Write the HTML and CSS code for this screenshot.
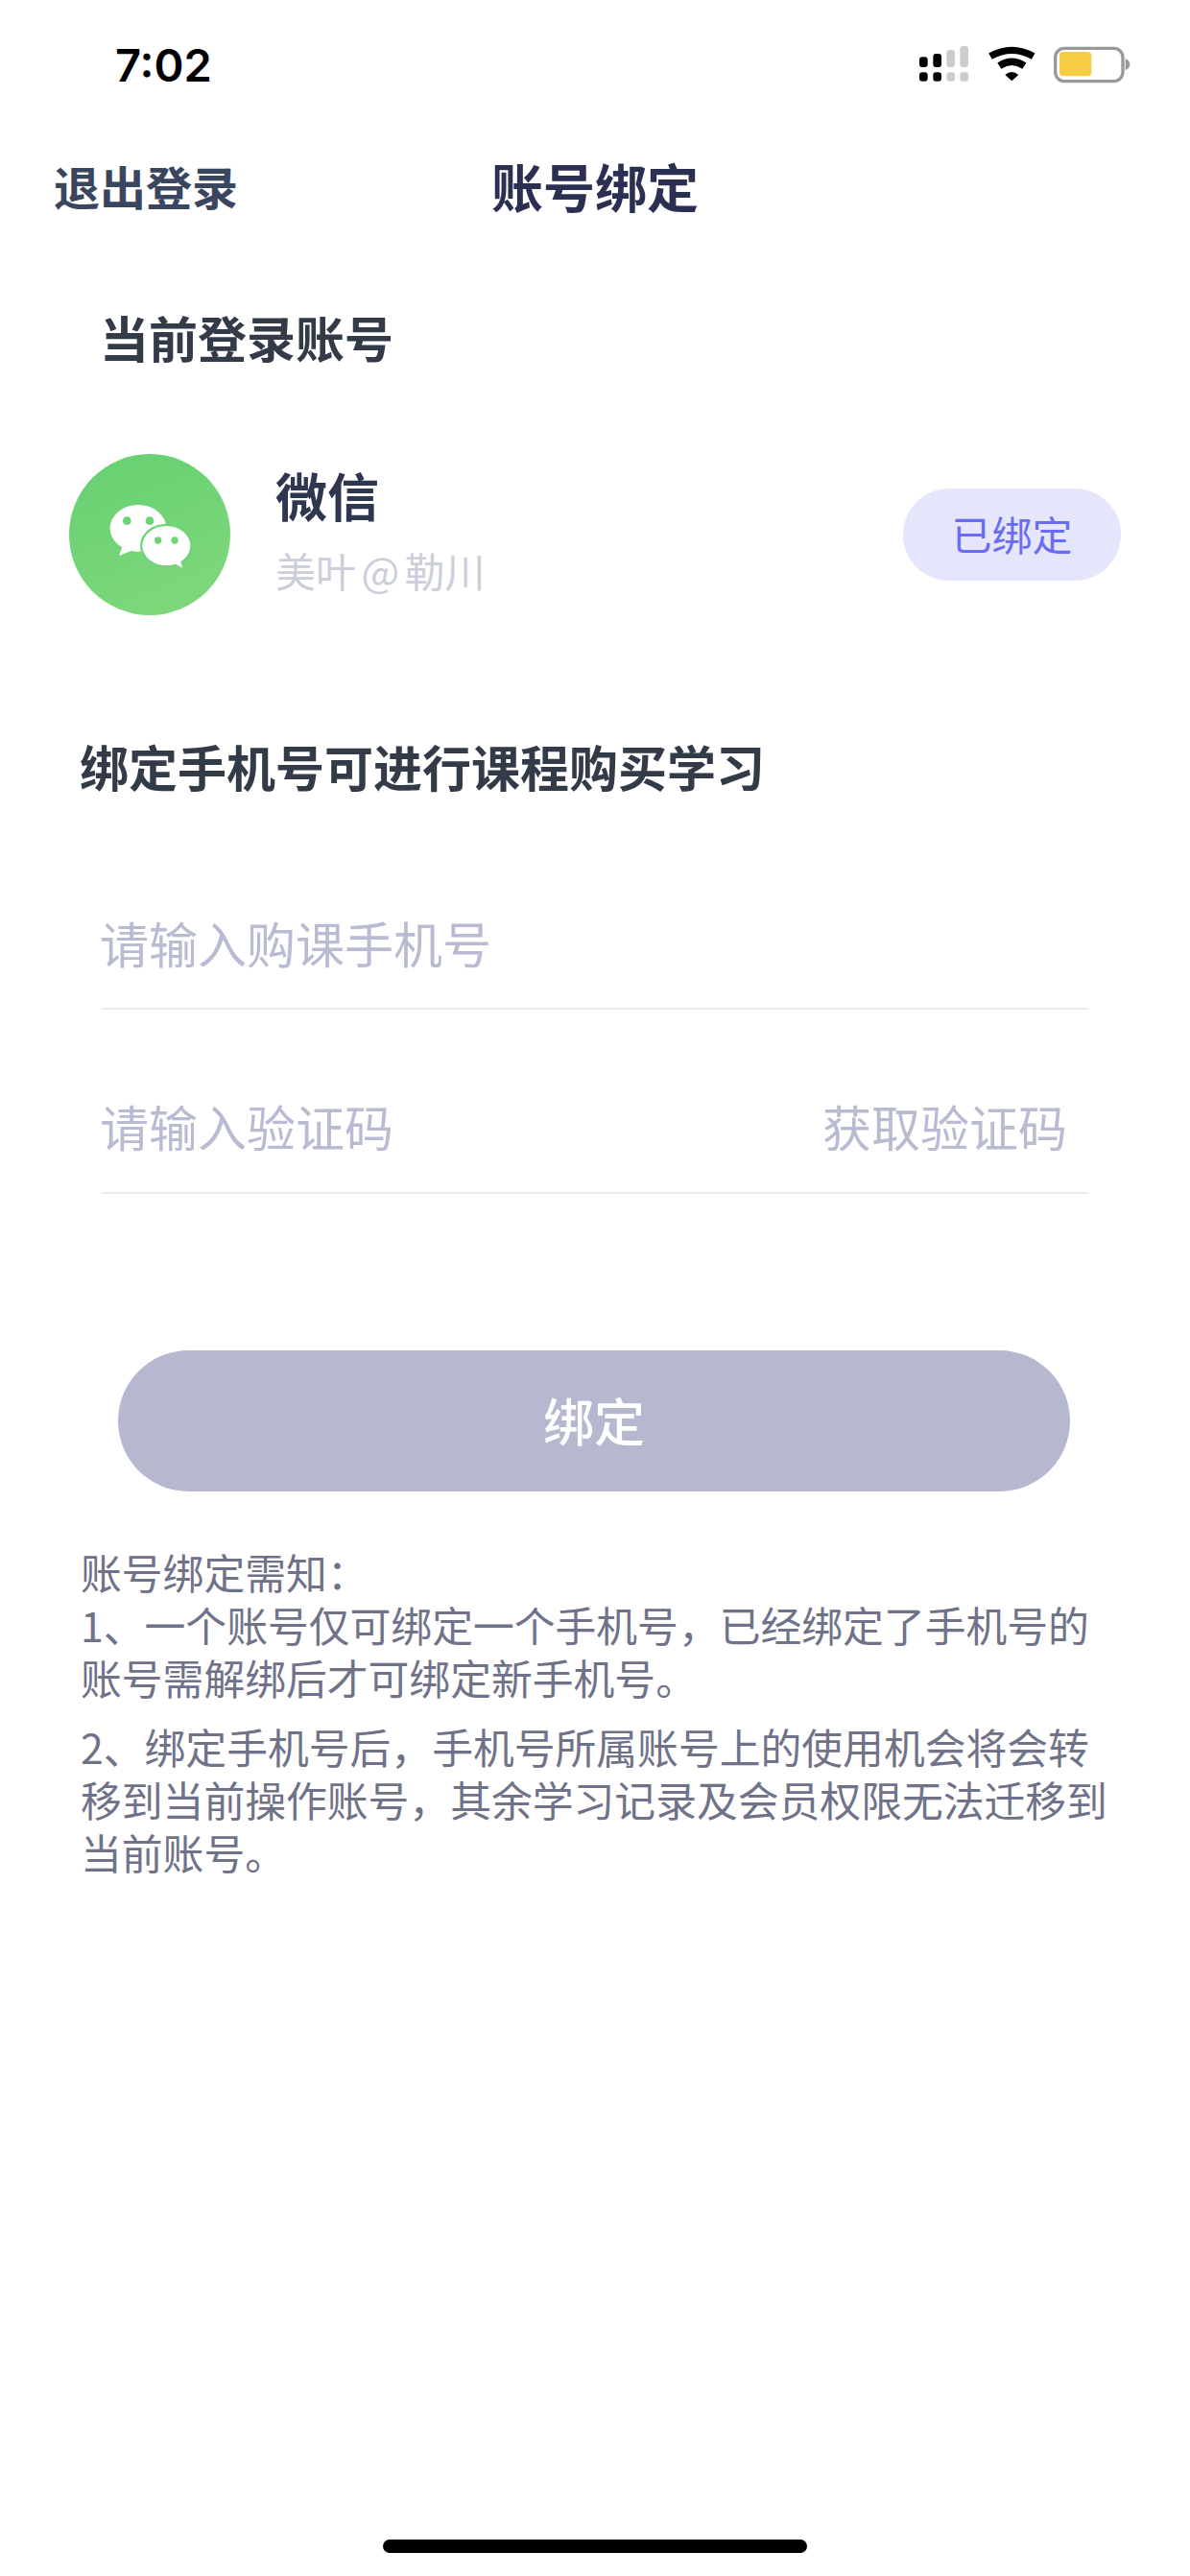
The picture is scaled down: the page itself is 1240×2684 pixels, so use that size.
FILE: index.html
```html
<!DOCTYPE html>
<html lang="zh-CN">
<head>
    <meta charset="UTF-8">
    <meta name="viewport" content="width=device-width, initial-scale=1.0">
    <title>账号绑定</title>
    <link rel="stylesheet" href="styles.css">
</head>
<body>
<div class="page">

    <div class="status-bar">
        <div class="time">7:02</div>
        <svg class="status-icons" width="220" height="40" viewBox="0 -3 660 120">
            <!-- signal -->
            <g fill="#000">
                <rect x="0" y="34" width="26" height="32" rx="9"/>
                <rect x="0" y="82" width="26" height="28" rx="9"/>
                <rect x="43" y="24" width="26" height="42" rx="9"/>
                <rect x="43" y="82" width="26" height="28" rx="9"/>
            </g>
            <g fill="#cccccc">
                <rect x="85" y="12" width="26" height="54" rx="9"/>
                <rect x="85" y="82" width="26" height="28" rx="9"/>
                <rect x="127" y="0" width="26" height="66" rx="9"/>
                <rect x="127" y="82" width="26" height="28" rx="9"/>
            </g>
            <!-- wifi -->
            <g fill="none" stroke="#000" stroke-width="22">
                <path d="M222 32Q289-6 356 32"/>
                <path d="M250 62Q289 36 328 62"/>
            </g>
            <path d="M268 90Q289 72 310 90L289 109Z" fill="#000"/>
            <!-- battery -->
            <rect x="425" y="7" width="211" height="103" rx="28" fill="#fff" stroke="#999" stroke-width="10"/>
            <rect x="438" y="18" width="100" height="76" rx="12" fill="#f6cd45"/>
            <path d="M644 39Q658 46 658 57Q658 68 644 76Z" fill="#999"/>
        </svg>
    </div>

    <div class="top-nav">
        <div class="logout">退出登录</div>
        <div class="nav-title">账号绑定</div>
        <div></div>
    </div>

    <h2 class="current-title">当前登录账号</h2>

    <div class="account-row">
        <svg class="avatar" width="168" height="168" viewBox="66 68 504 504">
            <defs>
                <linearGradient id="wxGreen" x1="0" y1="0" x2="0.4" y2="1">
                    <stop offset="0" stop-color="#66d072"/>
                    <stop offset="1" stop-color="#7cd77a"/>
                </linearGradient>
            </defs>
            <circle cx="318" cy="320" r="252" fill="url(#wxGreen)"/>
            <ellipse cx="282" cy="300" rx="88" ry="73" fill="#fff"/>
            <path d="M232 358L222 386L268 368Z" fill="#fff"/>
            <circle cx="247" cy="277" r="13" fill="#6dd276"/>
            <circle cx="318" cy="277" r="13" fill="#6dd276"/>
            <ellipse cx="370" cy="355" rx="82" ry="69" fill="#6fd377"/>
            <ellipse cx="370" cy="355" rx="75" ry="62" fill="#fff"/>
            <path d="M392 408L420 424L412 396Z" fill="#fff"/>
            <circle cx="344" cy="338" r="11" fill="#6fd377"/>
            <circle cx="396" cy="338" r="11" fill="#6fd377"/>
        </svg>
        <div class="account-info">
            <div class="account-name">微信</div>
            <div class="account-user">美叶 @ 勒川</div>
        </div>
        <div class="bound-pill">已绑定</div>
    </div>

    <h2 class="bind-title">绑定手机号可进行课程购买学习</h2>

    <div class="form-row first">
        <span class="placeholder">请输入购课手机号</span>
    </div>
    <div class="form-row second">
        <span class="placeholder">请输入验证码</span>
        <span class="placeholder get-code">获取验证码</span>
    </div>

    <button type="button" class="bind-btn">绑定</button>

    <div class="notes">
        <p>账号绑定需知：<br>1、一个账号仅可绑定一个手机号，已经绑定了手机号的账号需解绑后才可绑定新手机号。</p>
        <p>2、绑定手机号后，手机号所属账号上的使用机会将会转移到当前操作账号，其余学习记录及会员权限无法迁移到当前账号。</p>
    </div>

    <div class="home-bar"></div>
</div>
</body>
</html>
```

FILE: styles.css
```css
body {
    margin: 0;
    padding: 0;
    background-color: #fff;
    font-family: "Noto Sans CJK SC", "Liberation Sans", sans-serif;
}

.page {
    display: flex;
    flex-direction: column;
    min-height: 2684px;
    box-sizing: border-box;
}

.status-bar {
    display: flex;
    justify-content: space-between;
    align-items: center;
    height: 134px;
    padding: 0 62px 0 120px;
}

.time {
    font-family: Inter, "Liberation Sans", sans-serif;
    font-size: 47px;
    font-weight: 600;
    color: #000;
}

.top-nav {
    display: grid;
    grid-template-columns: 1fr auto 1fr;
    align-items: center;
    height: 118px;
}

.logout {
    padding-left: 56px;
    font-size: 48px;
    font-weight: 600;
    color: #3a4560;
}

.nav-title {
    font-size: 54px;
    font-weight: 600;
    color: #2b2f52;
}

.current-title,
.bind-title {
    margin: 0;
    font-size: 51px;
    line-height: 70px;
    font-weight: 700;
    color: #333a48;
}

.current-title {
    margin-top: 64px;
    padding-left: 104px;
}

.account-row {
    display: flex;
    align-items: center;
    margin-top: 87px;
    padding: 0 72px;
}

.avatar {
    flex-shrink: 0;
}

.account-info {
    display: flex;
    flex-direction: column;
    gap: 17px;
    margin-left: 47px;
    padding-bottom: 10px;
    flex: 1;
}

.account-name {
    font-size: 54px;
    line-height: 66px;
    font-weight: 600;
    color: #2f3650;
}

.account-user {
    font-size: 42px;
    line-height: 56px;
    word-spacing: -4px;
    color: #ccced9;
}

.bound-pill {
    width: 227px;
    height: 96px;
    line-height: 94px;
    text-align: center;
    border-radius: 48px;
    background-color: #e5e5fb;
    color: #6a6cf5;
    font-size: 42px;
}

.bind-title {
    margin-top: 122px;
    padding-left: 83px;
}

.form-row {
    display: flex;
    justify-content: space-between;
    margin: 0 106px;
    border-bottom: 2px solid #ececec;
}

.form-row.first {
    margin-top: 114px;
    padding-bottom: 33px;
}

.form-row.second {
    margin-top: 86px;
    padding-bottom: 34px;
}

.placeholder {
    margin-left: -2px;
    font-size: 51px;
    line-height: 70px;
    color: #b9bbd2;
}

.get-code {
    margin-right: 22px;
}

.bind-btn {
    display: block;
    width: 992px;
    height: 147px;
    margin: 163px 0 0 123px;
    padding: 0 0 3px 0;
    border: none;
    border-radius: 74px;
    background-color: #b6b8cf;
    color: #fff;
    font-family: inherit;
    font-size: 53px;
    font-weight: 500;
}

.notes {
    margin-top: 56px;
    padding: 0 80px 0 84px;
    font-size: 42.8px;
    line-height: 55px;
    color: #6f7288;
}

.notes p {
    margin: 0 0 17px 0;
}

.home-bar {
    width: 442px;
    height: 14px;
    margin: auto auto 24px auto;
    border-radius: 7px;
    background-color: #000;
}
```
